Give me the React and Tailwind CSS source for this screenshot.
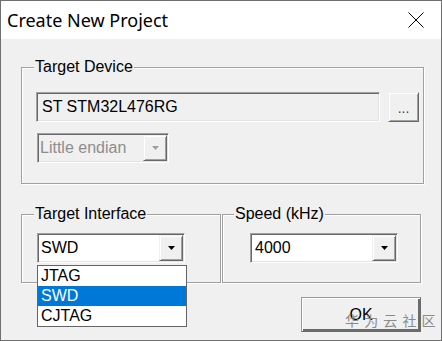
import React from "react";

const sunken =
  "border border-t-[#a0a0a0] border-l-[#a0a0a0] border-r-white border-b-white shadow-[inset_1px_1px_0_#696969,inset_-1px_-1px_0_#e3e3e3]";
const raised =
  "border border-t-[#f0f0f0] border-l-[#f0f0f0] border-r-[#696969] border-b-[#696969] shadow-[inset_1px_1px_0_#fff,inset_-1px_-1px_0_#a0a0a0] bg-[#f0f0f0]";
const etched =
  "border border-[#a0a0a0] shadow-[inset_1px_1px_0_#fff,1px_1px_0_#fff]";

const Arrow = ({ color = "#000" }) => (
  <svg width="7" height="4" viewBox="0 0 7 4">
    <polygon points="0,0 7,0 3.5,4" fill={color} />
  </svg>
);

const Combo = ({ value, width, pad = "pl-[3px]", disabled = false, children }) => (
  <div
    className={`relative flex h-[30px] ${width} ${sunken} ${
      disabled ? "bg-[#f0f0f0] text-[#8d8d8d]" : "bg-white text-black"
    }`}
  >
    <div className={`flex flex-1 items-center ${pad} text-[16px] leading-[18px]`}>{value}</div>
    <div className={`my-[1px] mr-[1px] flex w-[24px] items-center justify-center ${raised}`}>
      <Arrow color={disabled ? "#a0a0a0" : "#000"} />
    </div>
    {children}
  </div>
);

export default function App() {
  return (
    <div className="relative h-[341px] w-[442px] overflow-hidden border border-[#6f6f6f] bg-[#f0f0f0] font-['Liberation_Sans',Arial,sans-serif]">
      {/* Title bar */}
      <div className="flex h-[38px] items-center justify-between bg-white pl-[6px] pr-[17px]">
        <span className="font-['Noto_Sans',sans-serif] text-[18px] text-black">Create New Project</span>
        <svg width="16" height="16" viewBox="0 0 16 16">
          <path d="M0.5 0.5L15.5 15.5M15.5 0.5L0.5 15.5" stroke="#000" strokeWidth="1" />
        </svg>
      </div>

      {/* Target Device */}
      <fieldset className={`ml-[20px] mt-[19px] w-[403px] ${etched}`}>
        <legend className="ml-[12px] bg-[#f0f0f0] px-[1px] text-[16px] leading-[18px] text-black">
          Target Device
        </legend>
        <div className="pb-[20px] pl-[14px] pt-[16px]">
          <div className="flex">
            <div className={`flex h-[30px] w-[344px] items-center bg-[#f0f0f0] pl-[5px] text-[16px] text-black ${sunken}`}>
              ST STM32L476RG
            </div>
            <button className={`ml-[8px] flex h-[30px] w-[31px] items-end justify-center pb-[6px] text-[14px] leading-[14px] text-[#444] ${raised}`}>
              ...
            </button>
          </div>
          <div className="ml-[1px] mt-[11px]">
            <Combo value="Little endian" width="w-[132px]" pad="pl-[2px]" disabled />
          </div>
        </div>
      </fieldset>

      {/* Interface + Speed */}
      <div className="ml-[20px] mt-[21px] flex gap-[1px]">
        <fieldset className={`w-[200px] ${etched}`}>
          <legend className="ml-[12px] bg-[#f0f0f0] px-[1px] text-[16px] leading-[18px] text-black">
            Target Interface
          </legend>
          <div className="pb-[19px] pl-[15px] pt-[10px]">
            <Combo value="SWD" width="w-[148px]">
              <div className="absolute left-[-1px] top-[31px] z-10 w-[150px] border border-[#646464] bg-white text-[16px] leading-[20px]">
                <div className="h-[20px] pl-[3px] text-black">JTAG</div>
                <div className="h-[20px] bg-[#0078d7] pl-[3px] text-white">SWD</div>
                <div className="h-[20px] pl-[3px] text-black">CJTAG</div>
              </div>
            </Combo>
          </div>
        </fieldset>
        <fieldset className={`w-[199px] ${etched}`}>
          <legend className="ml-[11px] bg-[#f0f0f0] px-[1px] text-[16px] leading-[18px] text-black">
            Speed (kHz)
          </legend>
          <div className="pb-[19px] pl-[27px] pt-[10px]">
            <Combo value="4000" width="w-[148px]" pad="pl-[4px]" />
          </div>
        </fieldset>
      </div>

      {/* OK */}
      <div className="mr-[20px] mt-[14px] flex justify-end">
        <button className="flex h-[35px] w-[120px] items-center justify-center border border-[#6b6b6b] border-l-[#9a9a9a] border-t-[#9a9a9a] bg-[#f0f0f0] text-[16px] text-black shadow-[inset_1px_1px_0_#fff,inset_-2px_-2px_0_#6b6b6b]">
          OK
        </button>
      </div>

      {/* watermark */}
      <div className="pointer-events-none absolute left-[344px] top-[310px] font-['Noto_Sans_CJK_SC',sans-serif] text-[14px] leading-[18px] tracking-[1px] text-[#8a8a8a]">
        华 为 云 社 区
      </div>
    </div>
  );
}
